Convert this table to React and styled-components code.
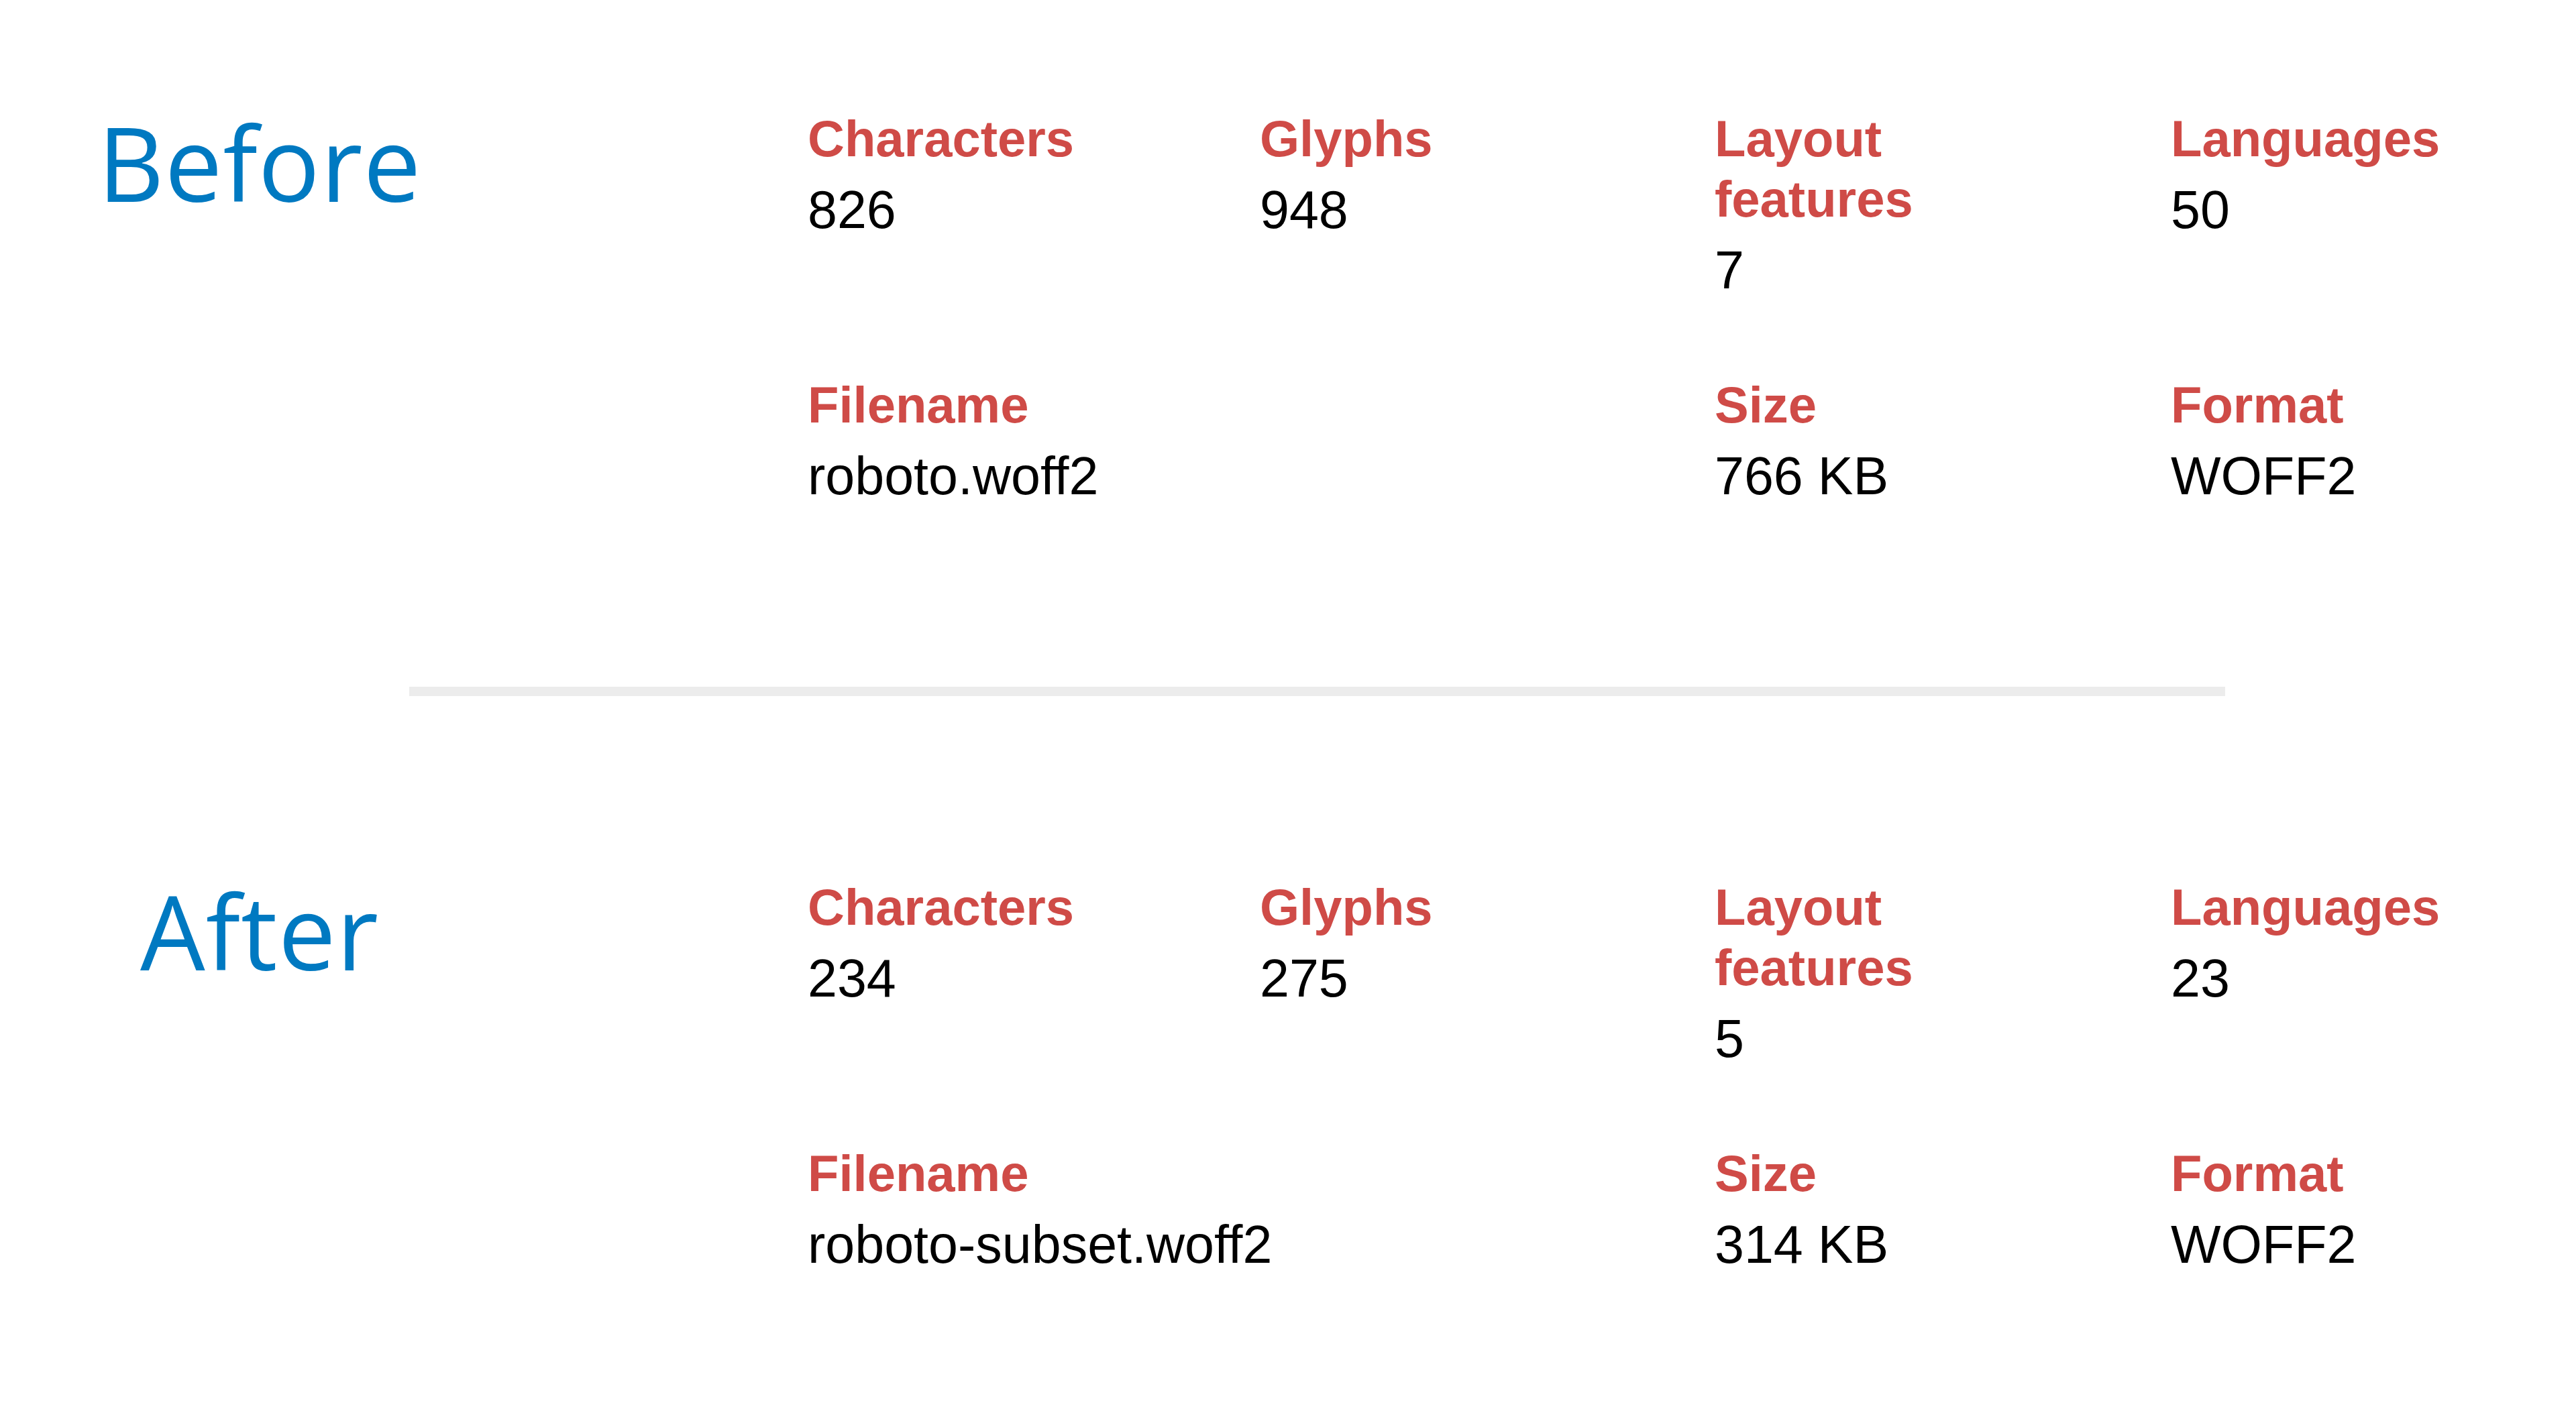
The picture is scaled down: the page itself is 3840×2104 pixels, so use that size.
import React from 'react'
import styled, { createGlobalStyle } from 'styled-components'

const GlobalStyle = createGlobalStyle`
  html, body {
    margin: 0;
    padding: 0;
    background: #ffffff;
  }
  body {
    font-family: "Liberation Sans", Arial, sans-serif;
    color: #000000;
  }
`

const fonts = [
  {
    title: 'Before',
    stats: [
      { label: 'Characters', value: '826' },
      { label: 'Glyphs', value: '948' },
      { label: 'Layout features', value: '7' },
      { label: 'Languages', value: '50' },
      { label: 'Filename', value: 'roboto.woff2', span: 2 },
      { label: 'Size', value: '766 KB' },
      { label: 'Format', value: 'WOFF2' },
    ],
  },
  {
    title: 'After',
    stats: [
      { label: 'Characters', value: '234' },
      { label: 'Glyphs', value: '275' },
      { label: 'Layout features', value: '5' },
      { label: 'Languages', value: '23' },
      { label: 'Filename', value: 'roboto-subset.woff2', span: 2 },
      { label: 'Size', value: '314 KB' },
      { label: 'Format', value: 'WOFF2' },
    ],
  },
]

const App = () => {
  return (
    <Page>
      <GlobalStyle />
      {fonts.map((font, i) => (
        <React.Fragment key={font.title}>
          {i > 0 && <Divider />}
          <Section>
            <Heading>{font.title}</Heading>
            <StatGrid>
              {font.stats.map(stat => (
                <Stat key={stat.label} span={stat.span}>
                  <Label>{stat.label}</Label>
                  <Value>{stat.value}</Value>
                </Stat>
              ))}
            </StatGrid>
          </Section>
        </React.Fragment>
      ))}
    </Page>
  )
}

const Page = styled.main`
  padding-top: 162px;
  padding-bottom: 200px;
  overflow: hidden;
`

const Section = styled.section`
  display: flex;
  align-items: flex-start;
`

const Heading = styled.h2`
  flex: 0 0 774px;
  margin: 0;
  text-align: center;
  font-family: "Open Sans", "Noto Sans", sans-serif;
  font-weight: 400;
  font-size: 153px;
  line-height: 160px;
  letter-spacing: 1px;
  color: #0079c1;
`

const StatGrid = styled.div`
  flex: 1;
  margin-left: 430px;
  display: grid;
  grid-template-columns: 674px 678px 680px 1fr;
  row-gap: 111px;
`

const Stat = styled.div`
  grid-column: span ${props => props.span || 1};
  width: 460px;
`

const Label = styled.div`
  font-family: "Liberation Sans", Arial, sans-serif;
  font-weight: 700;
  font-size: 76px;
  line-height: 90px;
  color: #cf4b47;
`

const Value = styled.div`
  margin-top: 16px;
  font-family: "Liberation Sans", Arial, sans-serif;
  font-weight: 400;
  font-size: 79px;
  line-height: 90px;
  color: #000000;
  white-space: nowrap;
`

const Divider = styled.hr`
  width: 2707px;
  height: 14px;
  margin: 269px 0 270px 610px;
  border: none;
  background: #ececec;
`

export default App
